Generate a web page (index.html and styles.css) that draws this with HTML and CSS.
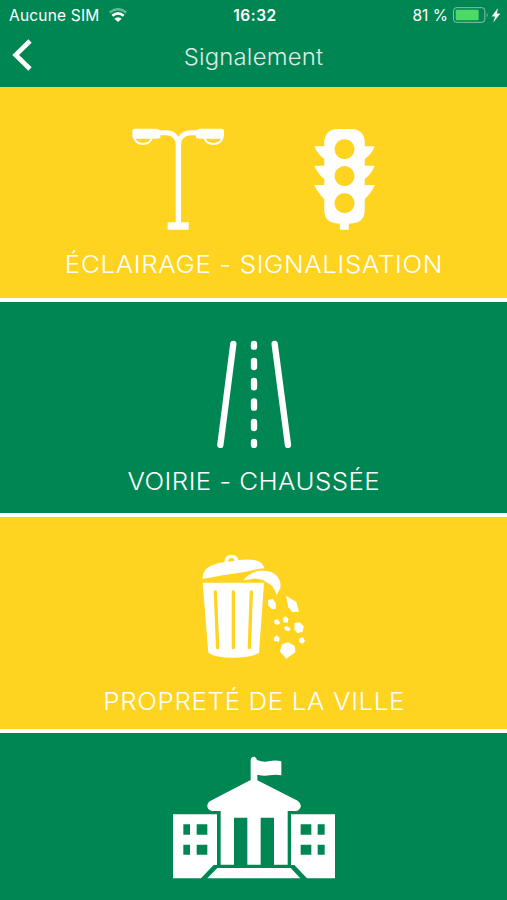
FILE: index.html
```html
<!DOCTYPE html>
<html lang="fr">
<head>
  <meta charset="UTF-8" />
  <title>Signalement</title>
  <link rel="stylesheet" href="styles.css">
</head>
<body>

  <header class="header">
    <div class="status">
      <div class="carrier">
        <span>Aucune SIM</span>
        <svg class="wifi" viewBox="0 0 54 42" width="18" height="14">
          <path d="M2 14 Q27 -7 52 14" fill="none" stroke="#fff" stroke-opacity=".4" stroke-width="7" />
          <path d="M10 23 Q27 9 44 23" fill="none" stroke="#fff" stroke-width="8" />
          <path d="M16 32 Q27 23 38 32 L27 42 Z" fill="#fff" />
        </svg>
      </div>
      <strong class="time">16:32</strong>
      <div class="power">
        <span>81 %</span>
        <svg class="battery" viewBox="0 0 144 48" width="48" height="16">
          <rect x="1.5" y="2" width="94" height="44" rx="9" fill="none" stroke="#fff" stroke-opacity=".5" stroke-width="3" />
          <rect x="8" y="8" width="69" height="32" rx="3" fill="#4cd964" />
          <path d="M101 17 Q107 24 101 31 Z" fill="#fff" fill-opacity=".5" />
          <path d="M134 5 L117 28 H127 L122 44 L141 20 H131 Z" fill="#fff" stroke="#fff" />
        </svg>
      </div>
    </div>
    <div class="navbar">
      <a class="back" href="#" aria-label="Retour">
        <svg viewBox="0 0 60 96" width="20" height="32">
          <path d="M54 6 L11 48 L54 90" fill="none" stroke="#fff" stroke-width="14" />
        </svg>
      </a>
      <h1 class="title">Signalement</h1>
    </div>
  </header>

  <main class="tiles">
    <a class="tile yellow" href="#">
      <div class="icons">
        <!-- street lamp -->
        <svg viewBox="36 40 276 306" width="92" height="102">
          <g fill="#fff">
            <path d="M44 42 H110 L121 47 H139 Q164 47 175 66 Q188 47 213 47 H228 L240 42 H304 Q312 42 312 50 V62 Q311 72 304 72 H240 L228 70 V62 H211 Q184 64 183 90 V323 H206 V345 H143 V323 H167 V90 Q165 64 140 62 H121 V70 L110 72 H46 Q37 72 37 62 V50 Q37 42 44 42 Z" />
          </g>
          <g fill="none" stroke="#fff" stroke-width="6">
            <path d="M42 68 Q48 88 68 88 Q91 88 95 71" />
            <path d="M254 71 Q258 88 281 88 Q302 88 308 68" />
          </g>
        </svg>
        <!-- traffic light -->
        <svg viewBox="73 40 184 306" width="61" height="102">
          <path fill="#fff" fill-rule="evenodd" d="M144 42 H186 Q226 44 226 84 V94 H256 Q249 115 226 133 V153 H256 Q248 176 226 193 V211 H256 Q248 233 226 253 V286 Q226 326 186 327 H178 V346 H151 V327 H144 Q104 326 104 286 V253 Q83 233 74 211 H104 V193 Q83 176 74 153 H104 V133 Q82 115 74 94 H104 V84 Q104 44 144 42 Z
            M165 73 a30 30 0 1 0 .1 0 Z M165 154 a30 30 0 1 0 .1 0 Z M165 236 a30 30 0 1 0 .1 0 Z" />
        </svg>
      </div>
      <span class="label">ÉCLAIRAGE - SIGNALISATION</span>
    </a>

    <a class="tile green" href="#">
      <div class="icons">
        <!-- road -->
        <svg viewBox="48 30 228 324" width="76" height="108">
          <g stroke="#fff" stroke-width="19" stroke-linecap="round">
            <path d="M100 42 L61 345" />
            <path d="M224 42 L264 345" />
            <path d="M162 42 V50 M162 93 V111 M162 153 V172 M162 214 V233 M162 276 V294 M162 336 V345" />
          </g>
        </svg>
      </div>
      <span class="label tight">VOIRIE - CHAUSSÉE</span>
    </a>

    <a class="tile yellow" href="#">
      <div class="icons">
        <!-- trash can -->
        <svg viewBox="36 28 312 315" width="104" height="105">
          <g fill="#fff">
            <path d="M38 103 Q36 75 66 62 Q85 54 104 52 Q103 31 124 30 Q144 31 145 46 Q184 42 204 49 Q218 55 223 71 Q191 74 163 82 Q101 90 38 103 Z" />
            <path d="M160 107 Q175 87 203 79 Q240 76 258 91 Q274 106 271 130 L260 151 Q251 121 229 113 Q220 103 208 104 Q195 99 185 103 Z" />
            <path d="M38 114 H222 L207 324 Q190 338 130 339 Q76 339 55 324 Z" />
            <path d="M234 166 L248 163 L257 176 L258 192 L246 194 L235 183 Z" />
            <path d="M288 153 L319 172 L327 201 L307 202 L295 188 Z" />
            <path d="M252 227 L263 224 L271 235 L263 241 L254 237 Z" />
            <path d="M278 220 L287 215 L295 222 L293 234 L280 233 Z" />
            <path d="M282 249 L289 244 L301 251 L298 259 L288 258 Z" />
            <path d="M314 235 L329 233 L341 245 L338 261 L322 266 L313 254 Z" />
            <path d="M251 279 L260 272 L269 280 L267 291 L253 289 Z" />
            <path d="M329 281 L339 278 L345 289 L338 297 L327 292 Z" />
            <path d="M276 299 L294 293 L314 304 L316 322 L289 342 L270 321 Z" />
          </g>
          <path d="M115 51 Q115 40 124 40 Q133 40 133 49 Z" fill="#ffd421" />
          <g stroke="#ffd421" stroke-width="10" stroke-linecap="round">
            <path d="M76 142 L83 309 M130 142 V309 M184 142 L178 309" />
          </g>
        </svg>
      </div>
      <span class="label">PROPRETÉ DE LA VILLE</span>
    </a>

    <a class="tile green" href="#">
      <div class="icons">
        <!-- town hall -->
        <svg viewBox="40 16 486 369" width="162" height="123">
          <g fill="#fff">
            <path d="M273 88 V27 Q275 18 283 18 Q290 19 292 28 Q312 36 330 31 Q349 27 365 32 V74 Q348 70 330 74 Q311 77 293 72 V89 L414 150 Q426 159 423 169 Q418 181 408 181 H384 V342 H343 V201 H303 V342 H263 V201 H223 V342 H183 V181 H158 Q146 179 143 168 Q142 156 153 150 Z" />
            <path fill-rule="evenodd" d="M40 191 H172 V343 H162 L124 383 H40 Z M71 221 H91 V252 H71 Z M111 221 H143 V252 H111 Z M71 282 H91 V312 H71 Z M111 282 H143 V312 H111 Z" />
            <path fill-rule="evenodd" d="M526 191 H394 V343 H404 L442 383 H526 Z M495 221 H474 V252 H495 Z M455 221 H423 V252 H455 Z M495 282 H474 V312 H495 Z M455 282 H423 V312 H455 Z" />
            <path d="M173 352 H393 L422 383 H143 Z" />
          </g>
        </svg>
      </div>
    </a>
  </main>

</body>
</html>
```

FILE: styles.css
```css
body {
  margin: 0;
  font-family: Inter, 'Liberation Sans', sans-serif;
  background: #fff;
  color: #fff;
}
.header {
  height: 87px;
  background: #008653;
}
.status {
  display: grid;
  grid-template-columns: 1fr auto 1fr;
  align-items: center;
  height: 30px;
  padding: 0 6px 0 9px;
  font-size: 15.5px;
}
.carrier, .power {
  display: flex;
  align-items: center;
  gap: 9px;
}
.carrier {
  letter-spacing: 0.2px;
}
.power {
  justify-content: flex-end;
  gap: 5px;
}
.time {
  font-weight: 600;
  letter-spacing: 0.5px;
}
.navbar {
  display: grid;
  grid-template-columns: 40px 1fr 40px;
  align-items: center;
  height: 50px;
}
.back {
  display: flex;
  padding-left: 12px;
}
.title {
  margin: 3px 0 0;
  font-size: 22.5px;
  font-weight: 300;
  text-align: center;
  letter-spacing: 0.2px;
  transform: scaleX(1.06);
  opacity: 0.85;
}
.tiles {
  display: flex;
  flex-direction: column;
  gap: 4px;
}
.tile {
  display: flex;
  flex-direction: column;
  align-items: center;
  justify-content: space-between;
  box-sizing: border-box;
  height: 211px;
  padding: 41px 0 18px;
  color: #fff;
  text-decoration: none;
}
.green {
  padding: 38px 0 16px;
  background: #008653;
}
.yellow {
  background: #ffd421;
}
.icons {
  display: flex;
  gap: 90px;
}
.icons svg {
  display: block;
}
/* wide light capitals */
.label {
  padding-left: 1px;
  font-size: 23.5px;
  font-weight: 350;
  line-height: 30px;
  white-space: nowrap;
  letter-spacing: 0.6px;
  transform: scaleX(1.1);
}
.tight {
  letter-spacing: 0.4px;
}
.tile:nth-child(3) {
  height: 212px;
  padding: 37px 0 12px;
}
.tile:last-child {
  height: 167px;
  padding: 23px 0 0;
}
```
